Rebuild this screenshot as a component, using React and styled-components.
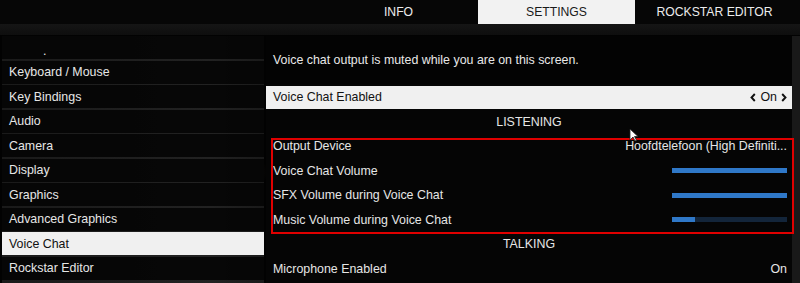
import React from 'react';
import styled, {createGlobalStyle} from 'styled-components';

const GlobalStyle = createGlobalStyle`
	html, body {
		margin: 0;
		padding: 0;
		background: #000;
	}
	body {
		font-family: 'Liberation Sans', Arial, sans-serif;
	}
`;

const Screen = styled.div`
	position: relative;
	width: 800px;
	height: 283px;
	overflow: hidden;
	background: radial-gradient(ellipse 40px 22px at 228px 172px, rgba(120, 100, 80, 0.35), transparent 100%),
		#020202;
	color: #e8e8e8;
	font-size: 12.4px;
	display: flex;
	flex-direction: column;
`;

const TabBar = styled.div`
	display: grid;
	grid-template-columns: repeat(3, 157px);
	column-gap: 1px;
	padding-left: 320px;
	height: 24px;
	background: #060606;
`;

const Tab = styled.div`
	display: flex;
	align-items: center;
	justify-content: center;
	font-size: 12.2px;
	color: ${({active}) => (active ? '#1a1a1a' : '#ececec')};
	background: ${({active}) => (active ? '#f2f2f2' : 'transparent')};
`;

const SubStrip = styled.div`
	height: 11px;
	background: linear-gradient(#151515, #0e0e0e);
`;

const Body = styled.div`
	flex: 1;
	display: flex;
	gap: 2px;
	padding-left: 2px;
	padding-top: 1px;
`;

const Menu = styled.div`
	width: 262px;
	display: flex;
	flex-direction: column;
	gap: 1.5px;
	background: linear-gradient(90deg, #1a1a1a, #222 80%, #1a1a1a);
`;

const MenuItem = styled.div`
	height: 23px;
	flex: none;
	display: flex;
	align-items: center;
	padding-left: 7px;
	color: ${({active}) => (active ? '#111' : '#e6e6e6')};
	background: ${({active}) => (active ? '#f0f0f0' : 'rgba(5, 5, 5, 0.94)')};
`;

const ClippedItem = styled(MenuItem)`
	align-items: flex-end;
	padding-left: 41px;
	padding-bottom: 4px;
	box-sizing: border-box;
	line-height: 8px;
	overflow: hidden;
`;

const Panel = styled.div`
	flex: 1;
	display: flex;
	flex-direction: column;
	gap: 1.5px;
	margin-right: 8px;
	background: #050505;
	box-shadow: 8px 0 0 #191919;
`;

const Notice = styled.div`
	height: 48px;
	flex: none;
	display: flex;
	align-items: center;
	padding-left: 7px;
	padding-bottom: 1px;
	box-sizing: border-box;
	background: #030303;
`;

const Row = styled.div`
	height: 23px;
	flex: none;
	display: flex;
	align-items: center;
	justify-content: space-between;
	padding: 0 5px 0 7px;
	color: ${({active}) => (active ? '#111' : '#e6e6e6')};
	background: ${({active}) => (active ? '#f0f0f0' : 'transparent')};
`;

const Heading = styled(Row)`
	justify-content: center;
	padding-right: 7px;
`;

const Group = styled.div`
	position: relative;
	display: flex;
	flex-direction: column;
	gap: 1.5px;
	&::after {
		content: '';
		position: absolute;
		top: 3px;
		bottom: -3px;
		left: 5px;
		right: -2px;
		border: 2px solid #e00000;
		pointer-events: none;
	}
`;

const Value = styled.span`
	display: flex;
	align-items: center;
	gap: 4px;
`;

const Chevron = styled.svg`
	display: block;
`;

const Track = styled.div`
	width: 115px;
	height: 5px;
	background: #13253a;
`;

const Fill = styled.div`
	height: 100%;
	background: #2f78c8;
`;

const Cursor = styled.svg`
	position: absolute;
	left: 629px;
	top: 128px;
`;

const Slider = ({value}) => (
	<Track>
		<Fill style={{width: `${value}%`}} />
	</Track>
);

const Left = () => (
	<Chevron width="6" height="9" viewBox="0 0 6 9">
		<path d="M4.8 1 L1.5 4.5 L4.8 8" fill="none" stroke="#111" strokeWidth="1.9" />
	</Chevron>
);

const Right = () => (
	<Chevron width="6" height="9" viewBox="0 0 6 9">
		<path d="M1.2 1 L4.5 4.5 L1.2 8" fill="none" stroke="#111" strokeWidth="1.9" />
	</Chevron>
);

const menu = [
	{label: 'Keyboard / Mouse'},
	{label: 'Key Bindings'},
	{label: 'Audio'},
	{label: 'Camera'},
	{label: 'Display'},
	{label: 'Graphics'},
	{label: 'Advanced Graphics'},
	{label: 'Voice Chat', active: true},
	{label: 'Rockstar Editor'},
];

const App = () => (
	<>
		<GlobalStyle />
		<Screen>
			<TabBar>
				<Tab>INFO</Tab>
				<Tab active>SETTINGS</Tab>
				<Tab>ROCKSTAR EDITOR</Tab>
			</TabBar>
			<SubStrip />
			<Body>
				<Menu>
					<ClippedItem>.</ClippedItem>
					{menu.map(({label, active}) => (
						<MenuItem key={label} active={active}>
							{label}
						</MenuItem>
					))}
				</Menu>
				<Panel>
					<Notice>Voice chat output is muted while you are on this screen.</Notice>
					<Row active>
						<span>Voice Chat Enabled</span>
						<Value>
							<Left />
							On
							<Right />
						</Value>
					</Row>
					<Heading>LISTENING</Heading>
					<Group>
						<Row>
							<span>Output Device</span>
							<span>Hoofdtelefoon (High Definiti...</span>
						</Row>
						<Row>
							<span>Voice Chat Volume</span>
							<Slider value={100} />
						</Row>
						<Row>
							<span>SFX Volume during Voice Chat</span>
							<Slider value={100} />
						</Row>
						<Row>
							<span>Music Volume during Voice Chat</span>
							<Slider value={20} />
						</Row>
					</Group>
					<Heading>TALKING</Heading>
					<Row>
						<span>Microphone Enabled</span>
						<span>On</span>
					</Row>
				</Panel>
			</Body>
			<Cursor width="10" height="14" viewBox="0 0 10 14">
				<path d="M1 1 L1 12 L4 9 L6 13 L7.5 12.3 L5.5 8.5 L9 8.5 Z" fill="#fff" stroke="#222" strokeWidth="0.8" />
			</Cursor>
		</Screen>
	</>
);

export default App;
